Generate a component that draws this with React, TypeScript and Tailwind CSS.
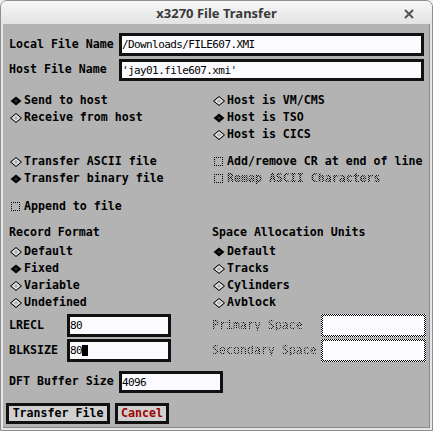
import React from "react";

const mono = "font-['DejaVu_Sans_Mono','Liberation_Mono',monospace]";
const lblBase = `${mono} font-bold text-[11.6px] leading-none whitespace-pre`;
const lbl = `${lblBase} text-black`;
const stip =
  "bg-[repeating-conic-gradient(#000_0_25%,transparent_0_50%)] bg-[length:2px_2px]";
const inTxt = `${mono} text-[11px] tracking-[-0.6px] text-black leading-none whitespace-pre`;

function Diamond({ on }: { on: boolean }) {
  return (
    <svg width="12" height="10" viewBox="0 0 12 10" className="shrink-0">
      {on ? (
        <>
          <polygon points="6,0.5 11.5,5 6,9.5 0.5,5" fill="#000" />
          <polygon points="6,3.5 8,5 6,6.5 4,5" fill="#333" />
        </>
      ) : (
        <>
          <polygon points="6,0.5 11.5,5 6,9.5 0.5,5" fill="#b3b3b3" stroke="#000" strokeWidth="1" />
          <polygon points="6,2.3 9.3,5 6,7.7 2.7,5" fill="none" stroke="#f4f4f4" strokeWidth="1" />
        </>
      )}
    </svg>
  );
}

function Radio({ on, label }: { on: boolean; label: string }) {
  return (
    <div className="h-[17px] flex items-center">
      <div className="w-[1px]" />
      <Diamond on={on} />
      <div className="w-[2px]" />
      <span className={lbl}>{label}</span>
    </div>
  );
}

function Check({ label, disabled }: { label: string; disabled?: boolean }) {
  return (
    <div className="h-[17px] flex items-center">
      <div className="w-[2px]" />
      <div className="w-[9px] h-[9px] border border-dotted border-black shrink-0" />
      <div className="w-[4px]" />
      {disabled ? (
        <span className={`${lblBase} ${stip} bg-clip-text text-transparent`}>{label}</span>
      ) : (
        <span className={lbl}>{label}</span>
      )}
    </div>
  );
}

function Field({ w, h, text, cursor }: { w: string; h: string; text: string; cursor?: boolean }) {
  return (
    <div className={`${w} ${h} border-[3px] border-[#111] bg-[#fbfbff] flex items-center shrink-0`}>
      <span className={inTxt}>{text}</span>
      {cursor && <span className="w-[6px] h-[11px] bg-black" />}
    </div>
  );
}

function StipField({ w, h }: { w: string; h: string }) {
  return (
    <div className={`${w} ${h} ${stip} bg-[#fff] p-[2px] shrink-0`}>
      <div className="w-full h-full bg-[#fbfbff]" />
    </div>
  );
}

export default function App() {
  return (
    <div className="w-[433px] h-[431px] bg-[#f0f0f0]">
      <div className="w-full h-full rounded-t-[7px] border border-[#8f8f8f] flex flex-col overflow-hidden bg-[#e6e6e6]">
        <div className="h-[23px] shrink-0 bg-gradient-to-b from-[#f7f7f7] to-[#e3e3e3] relative flex items-center justify-center">
          <span className="font-['Noto_Sans',sans-serif] font-bold text-[13px] text-[#3a3a3a] leading-none mt-[1px]">
            x3270 File Transfer
          </span>
          <svg width="10" height="10" viewBox="0 0 10 10" className="absolute right-[18px] top-[8px]">
            <path d="M1 1 L9 9 M9 1 L1 9" stroke="#555" strokeWidth="2" />
          </svg>
        </div>
        <div className="flex-1 px-[2px] pb-[2px]">
          <div className="w-full h-full bg-[#b3b3b3] border-r border-b border-[#8a8a8a] pl-[6px] pt-[9px]">
            <div className="h-[23px] flex items-center">
              <span className={`${lbl} w-[110px]`}>Local File Name</span>
              <Field w="w-[305px]" h="h-[23px]" text="/Downloads/FILE607.XMI" />
            </div>
            <div className="h-[22px] flex items-center mt-[3px]">
              <span className={`${lbl} w-[110px]`}>Host File Name</span>
              <Field w="w-[305px]" h="h-[22px]" text="'jay01.file607.xmi'" />
            </div>

            <div className="grid grid-cols-[203px_1fr] mt-[11px]">
              <div>
                <Radio on label="Send to host" />
                <Radio on={false} label="Receive from host" />
              </div>
              <div>
                <Radio on={false} label="Host is VM/CMS" />
                <Radio on label="Host is TSO" />
                <Radio on={false} label="Host is CICS" />
              </div>
            </div>

            <div className="grid grid-cols-[203px_1fr] mt-[10px]">
              <div>
                <Radio on={false} label="Transfer ASCII file" />
                <Radio on label="Transfer binary file" />
              </div>
              <div>
                <Check label="Add/remove CR at end of line" />
                <Check label="Remap ASCII Characters" disabled />
              </div>
            </div>

            <div className="mt-[11px]">
              <Check label="Append to file" />
            </div>

            <div className="grid grid-cols-[203px_1fr] mt-[8px]">
              <div>
                <div className="h-[20px] flex items-center">
                  <span className={lbl}>Record Format</span>
                </div>
                <Radio on={false} label="Default" />
                <Radio on label="Fixed" />
                <Radio on={false} label="Variable" />
                <Radio on={false} label="Undefined" />
              </div>
              <div>
                <div className="h-[20px] flex items-center">
                  <span className={lbl}>Space Allocation Units</span>
                </div>
                <Radio on label="Default" />
                <Radio on={false} label="Tracks" />
                <Radio on={false} label="Cylinders" />
                <Radio on={false} label="Avblock" />
              </div>
            </div>

            <div className="grid grid-cols-[203px_1fr] mt-[3px]">
              <div>
                <div className="h-[23px] flex items-center">
                  <span className={`${lbl} w-[58px]`}>LRECL</span>
                  <Field w="w-[104px]" h="h-[23px]" text="80" />
                </div>
                <div className="h-[23px] flex items-center mt-[2px]">
                  <span className={`${lbl} w-[58px]`}>BLKSIZE</span>
                  <Field w="w-[104px]" h="h-[23px]" text="80" cursor />
                </div>
              </div>
              <div>
                <div className="h-[23px] flex items-center">
                  <span className={`${lblBase} w-[109px] font-normal ${stip} bg-clip-text text-transparent`}>Primary Space</span>
                  <StipField w="w-[105px]" h="h-[23px]" />
                </div>
                <div className="h-[23px] flex items-center mt-[2px]">
                  <span className={`${lblBase} w-[109px] font-normal ${stip} bg-clip-text text-transparent`}>Secondary Space</span>
                  <StipField w="w-[105px]" h="h-[23px]" />
                </div>
              </div>
            </div>

            <div className="h-[22px] flex items-center mt-[9px]">
              <span className={`${lbl} w-[110px]`}>DFT Buffer Size</span>
              <Field w="w-[104px]" h="h-[22px]" text="4096" />
            </div>

            <div className="flex mt-[10px] -ml-[3px] gap-[5px]">
              <div className="w-[104px] h-[21px] border-[3px] border-[#111] bg-[#d0d0d0] flex items-center justify-center">
                <span className={lbl}>Transfer File</span>
              </div>
              <div className="w-[54px] h-[21px] border-[3px] border-[#111] bg-[#d0d0d0] flex items-center justify-center">
                <span className={`${lblBase} text-[#a00000]`}>Cancel</span>
              </div>
            </div>
          </div>
        </div>
      </div>
    </div>
  );
}
